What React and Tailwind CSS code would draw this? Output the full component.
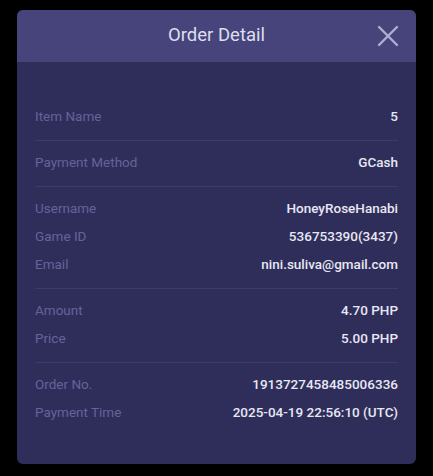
import React from 'react';

const sections = [
  [['Item Name', '5']],
  [['Payment Method', 'GCash']],
  [
    ['Username', 'HoneyRoseHanabi'],
    ['Game ID', '536753390(3437)'],
    ['Email', 'nini.suliva@gmail.com'],
  ],
  [
    ['Amount', '4.70 PHP'],
    ['Price', '5.00 PHP'],
  ],
  [
    ['Order No.', '1913727458485006336'],
    ['Payment Time', '2025-04-19 22:56:10 (UTC)'],
  ],
];

export default function App() {
  return (
    <div
      className="min-h-screen w-full bg-black pt-[10px] px-[17px]"
      style={{ fontFamily: 'Roboto, "Liberation Sans", sans-serif' }}
    >
      <div className="w-[399px] h-[454px] rounded-[6px] overflow-hidden bg-[#2f2e5a] flex flex-col">
        {/* Header */}
        <div className="h-[52px] bg-[#46447a] relative flex items-center justify-center shrink-0">
          <h1 className="text-[18.5px] text-[#dfdef0] font-normal">Order Detail</h1>
          <button className="absolute right-[17px] top-[15px] w-[22px] h-[22px]">
            <svg viewBox="0 0 22 22" className="w-[22px] h-[22px]">
              <path d="M2 2 L20 20 M20 2 L2 20" stroke="#aeadd2" strokeWidth="2.4" strokeLinecap="round" />
            </svg>
          </button>
        </div>

        {/* Body */}
        <div className="px-[18px] pt-[32.5px]">
          {sections.map((rows, i) => (
            <div
              key={i}
              className={`pt-[8px] pb-[9px] ${i < sections.length - 1 ? 'border-b border-[#3c3b6b]' : ''}`}
            >
              {rows.map(([label, value]) => (
                <div key={label} className="h-[28px] flex items-center justify-between text-[13.5px]">
                  <span className="text-[#64639a]">{label}</span>
                  <span className="text-[#e8e7f3] font-medium">{value}</span>
                </div>
              ))}
            </div>
          ))}
        </div>
      </div>
    </div>
  );
}
